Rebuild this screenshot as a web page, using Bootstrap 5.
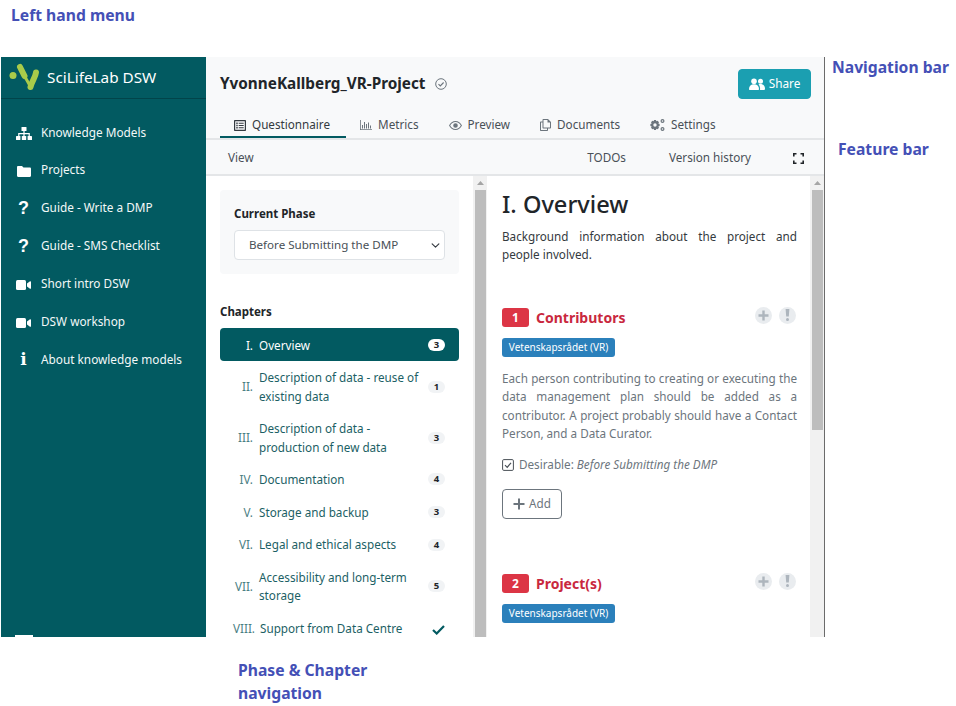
<!DOCTYPE html>
<html lang="en">
<head>
    <meta charset="UTF-8">
    <title>Questionnaire - SciLifeLab DSW</title>
    <link href="https://cdn.jsdelivr.net/npm/bootstrap@5.3.0/dist/css/bootstrap.min.css" rel="stylesheet">
    <style>
        body {
            background-color: #fff;
            font-family: "Noto Sans", sans-serif;
            font-size: 11.7px;
            color: #343a40;
            overflow: hidden;
        }
        .page-note {
            color: #4450b6;
            font-weight: 700;
            font-size: 15.7px;
            line-height: 23px;
        }
        .note-top { height: 57px; padding: 4px 0 0 11px; }
        .note-side { margin-top: -1px; }
        .note-nav { margin: 0 0 59px 7px; }
        .note-feature { margin-left: 13px; }
        .note-bottom { padding: 22px 0 0 238px; }
        .app-frame {
            width: 824px;
            height: 580px;
            margin-left: 1px;
            border-right: 1px solid #6b6b6b;
            overflow: hidden;
        }
        .side-menu {
            width: 205px;
            flex-shrink: 0;
            background-color: #025a61;
            color: #fff;
        }
        .side-brand {
            height: 42px;
            padding-left: 7px;
            border-bottom: 1px solid #01444a;
            font-size: 15.3px;
            gap: 6px;
        }
        .side-list { padding-top: 14.5px; }
        .side-item {
            height: 37.85px;
            font-size: 11.8px;
            color: #f3f8f8;
        }
        .side-icon {
            width: 40px;
            padding-left: 5px;
            flex-shrink: 0;
            text-align: center;
            fill: #fff;
        }
        .glyph-icon { font-family: "Liberation Sans", sans-serif; font-weight: 700; font-size: 18px; color: #fff; line-height: 1; }
        .glyph-serif { font-family: "DejaVu Serif", serif; font-size: 17px; }
        .side-stub { width: 18px; height: 2px; margin: auto 0 0 14px; background-color: #fff; flex-shrink: 0; }
        .main-col { min-width: 0; }
        .top-bar { background-color: #f8f9fa; border-bottom: 2px solid #e4e6e8; height: 83px; flex-shrink: 0; }
        .title-row { height: 55px; padding: 0 13px 2px 14px; }
        .project-title { font-size: 15.3px; font-weight: 700; color: #212529; margin: 0 2px 0 0; }
        .share-btn {
            --bs-btn-bg: #1b9fb1;
            --bs-btn-border-color: #1b9fb1;
            --bs-btn-color: #fff;
            --bs-btn-border-radius: 4px;
            font-size: 11.8px;
            width: 73px;
            height: 30px;
            padding: 0;
        }
        .tab-row { padding-left: 14px; height: 26px; }
        .tab-row .nav-link {
            color: #495057;
            font-size: 11.7px;
            padding: 2px 14px 0;
            height: 26px;
            display: flex;
            align-items: center;
            gap: 6px;
            border-bottom: 2px solid transparent;
            margin-right: 2px;
        }
        .tab-row .nav-link.active { color: #343a40; border-bottom-color: #025a61; padding-right: 16px; margin-right: 0; }
        .tab-row .nav-link svg { fill: #6c757d; }
        .tab-row .nav-link.active svg { fill: #343a40; }
        .feature-bar {
            height: 36px;
            flex-shrink: 0;
            background-color: #f8f9fa;
            border-bottom: 2px solid #e4e6e8;
            padding: 2px 20px 0 22px;
            color: #495057;
        }
        .todo-gap { margin: 0 43px 0 auto; }
        .history-gap { margin-right: 42px; }
        .work-area { min-height: 0; }
        .phase-pane { width: 267px; flex-shrink: 0; padding: 14px 14px 0 14px; overflow: hidden; }
        .phase-box { background-color: #f8f9fa; border-radius: 4px; padding: 16px 14px 14px; height: 84px; }
        .phase-label { font-weight: 700; font-size: 11.5px; color: #212529; margin-bottom: 8px; line-height: 16px; }
        .phase-select {
            height: 30px;
            font-size: 11.6px;
            padding: 0 24px 0 14px;
            color: #495057;
            border-radius: 4px;
            background-position: right 3px center;
            background-size: 11px 9px;
        }
        .chapter-head { font-weight: 700; font-size: 11.5px; color: #212529; margin: 30px 0 8px; line-height: 16px; }
        .chapter-item {
            border: 0;
            padding: 1px 0 0;
            background: none;
            color: #1c5f65;
            display: flex;
            align-items: center;
            font-size: 11.7px;
            line-height: 18.3px;
        }
        .chapter-item.h-one { height: 32.6px; }
        .chapter-item.h-two { height: 51px; }
        .chapter-item.active {
            background-color: #025a61;
            color: #fff;
            border-radius: 4px;
            margin-top: 0;
        }
        .chapter-num { width: 33px; text-align: right; flex-shrink: 0; margin-right: 6px; color: #4c7f84; }
        .chapter-item.active .chapter-num { color: #fff; }
        .chapter-name { flex: 1; min-width: 0; padding-right: 4px; }
        .chapter-count {
            background-color: #f1f3f5;
            color: #212529;
            border-radius: 8px;
            font-size: 9.5px;
            padding: 0;
            width: 17px;
            line-height: 12px;
            margin-right: 14px;
            flex-shrink: 0;
        }
        .chapter-item.active .chapter-count { background-color: #fff; }
        .chapter-check { margin-right: 12px; width: 17px; text-align: center; flex-shrink: 0; }
        .num-wide { width: 35px; margin-right: 5px; white-space: nowrap; }
        .fake-scroll {
            width: 14px;
            flex-shrink: 0;
            background-color: #f1f1f1;
            display: flex;
            flex-direction: column;
        }
        .scroll-arrow { height: 14px; display: flex; align-items: center; justify-content: center; }
        .scroll-thumb { background-color: #bdbdbd; margin: 0 1px 0 2px; }
        .thumb-long { flex: 1; }
        .thumb-short { height: 240px; }
        .content-pane { flex: 1; min-width: 0; padding: 13px 13px 0 15px; overflow: hidden; }
        .chapter-title { font-size: 23.6px; font-weight: 500; color: #212529; margin: 0 0 8px; line-height: 30px; }
        .chapter-intro { text-align: justify; color: #343a40; line-height: 18.3px; margin: 0 0 43px; }
        .question-block { height: 266px; }
        .question-row { height: 22px; margin-bottom: 9px; }
        .question-num {
            background-color: #dc3545;
            color: #fff;
            border-radius: 3px;
            width: 27px;
            height: 19px;
            font-size: 12px;
            font-weight: 700;
            padding: 0;
            line-height: 19px;
            margin-right: 7px;
        }
        .question-title { font-size: 14px; font-weight: 700; color: #c9283e; line-height: 20px; }
        .round-action {
            width: 17px;
            height: 17px;
            border-radius: 50%;
            background-color: #e9ecef;
            margin-left: 7px;
            display: flex;
            align-items: center;
            justify-content: center;
            margin-top: -5px;
        }
        .round-last { margin-right: 1px; }
        .package-tag {
            background-color: #2b80bb;
            color: #fff;
            border-radius: 3px;
            font-weight: 400;
            font-size: 10px;
            padding: 0;
            width: 113px;
            height: 19px;
            line-height: 19px;
            display: block;
        }
        .question-text { color: #6c757d; text-align: justify; line-height: 18.5px; margin: 12px 0 13px; }
        .desired-row { color: #6c757d; gap: 5px; height: 18px; margin-bottom: 15px; }
        .add-btn {
            --bs-btn-color: #6c757d;
            --bs-btn-border-color: #6c757d;
            --bs-btn-border-radius: 4px;
            width: 60px;
            height: 30px;
            font-size: 11.7px;
            padding: 0;
            gap: 4px;
        }
    </style>
</head>
<body>
    <div class="page-note note-top">Left hand menu</div>

    <div class="d-flex">
        <div class="app-frame d-flex">
            <div class="side-menu d-flex flex-column">
                <div class="side-brand d-flex align-items-center">
                    <svg width="33" height="30" viewBox="0 0 33 30" fill="none" stroke="#a9cb4a" stroke-linecap="round">
                        <circle cx="5" cy="12.500" r="3.500" fill="#a9cb4a" stroke="none"/>
                        <path d="M12 4 16.500 13" stroke-width="6"/>
                        <path d="M16.500 13 21 21" stroke-width="3"/>
                        <path d="M28 9.500C27.500 14 24 18 22.500 24" stroke-width="6"/>
                    </svg>
                    <span>SciLifeLab DSW</span>
                </div>
                <div class="side-list flex-grow-1 d-flex flex-column">
                    <div class="side-item d-flex align-items-center">
                        <span class="side-icon"><svg width="16" height="13" viewBox="0 0 16 13"><rect x="5.500" y="0" width="5" height="4" rx=".6"/><rect x="0" y="9" width="4.400" height="4" rx=".6"/><rect x="5.800" y="9" width="4.400" height="4" rx=".6"/><rect x="11.600" y="9" width="4.400" height="4" rx=".6"/><path d="M7.400 4h1.200v2h5.200v3h-1.200V7.200H8.600V9H7.400V7.200H3.400V9H2.200V6h5.200z"/></svg></span>
                        <span>Knowledge Models</span>
                    </div>
                    <div class="side-item d-flex align-items-center">
                        <span class="side-icon"><svg width="14" height="11" viewBox="0 0 14 11"><path d="M1.200 0H5l1.500 1.600h6.300c.7 0 1.200.5 1.200 1.200v7c0 .7-.5 1.200-1.200 1.200H1.200C.5 11 0 10.500 0 9.800V1.200C0 .5.500 0 1.200 0z"/></svg></span>
                        <span>Projects</span>
                    </div>
                    <div class="side-item d-flex align-items-center">
                        <span class="side-icon glyph-icon">?</span>
                        <span>Guide - Write a DMP</span>
                    </div>
                    <div class="side-item d-flex align-items-center">
                        <span class="side-icon glyph-icon">?</span>
                        <span>Guide - SMS Checklist</span>
                    </div>
                    <div class="side-item d-flex align-items-center">
                        <span class="side-icon"><svg width="15" height="10" viewBox="0 0 15 10"><rect width="10" height="10" rx="1.500"/><path d="M11 3.600 14 1.300c.4-.3 1-.1 1 .5v6.400c0 .6-.6.8-1 .5L11 6.400z"/></svg></span>
                        <span>Short intro DSW</span>
                    </div>
                    <div class="side-item d-flex align-items-center">
                        <span class="side-icon"><svg width="15" height="10" viewBox="0 0 15 10"><rect width="10" height="10" rx="1.500"/><path d="M11 3.600 14 1.300c.4-.3 1-.1 1 .5v6.400c0 .6-.6.8-1 .5L11 6.400z"/></svg></span>
                        <span>DSW workshop</span>
                    </div>
                    <div class="side-item d-flex align-items-center">
                        <span class="side-icon glyph-icon glyph-serif">i</span>
                        <span>About knowledge models</span>
                    </div>
                    <div class="side-stub"></div>
                </div>
            </div>

            <div class="main-col flex-grow-1 d-flex flex-column">
                <div class="top-bar">
                    <div class="title-row d-flex align-items-center">
                        <h1 class="project-title">YvonneKallberg_VR-Project</h1>
                        <svg class="ms-2" width="12" height="12" viewBox="0 0 12 12" fill="none" stroke="#6c757d"><circle cx="6" cy="6" r="5.300"/><path d="M3.500 6.200 5.300 8 8.600 4.500" stroke-width="1.100"/></svg>
                        <button class="btn share-btn ms-auto d-flex align-items-center justify-content-center gap-1" type="button">
                            <svg width="16" height="12" viewBox="0 0 16 12" fill="#fff"><circle cx="5" cy="3.200" r="2.800"/><circle cx="11.500" cy="3.200" r="2.500"/><path d="M0 11c0-3 2-4.800 5-4.800s5 1.800 5 4.800c0 .6-.4 1-1 1H1c-.6 0-1-.4-1-1zM11 12c.3-2.200-.2-4.300-1.500-5.500.6-.3 1.300-.4 2-.4 2.500 0 4.500 1.600 4.500 4.300 0 .9-.5 1.600-1.300 1.600z"/></svg>
                            Share
                        </button>
                    </div>
                    <ul class="nav tab-row">
                        <li class="nav-item"><a class="nav-link active" href="#"><svg width="12" height="11" viewBox="0 0 12 11"><path fill-rule="evenodd" d="M1 0h10c.6 0 1 .4 1 1v9c0 .6-.4 1-1 1H1c-.6 0-1-.4-1-1V1c0-.6.4-1 1-1zm.2 1.200v8.600h9.600V1.200zM2.300 2.600h1.400V4H2.300zm2.400.2h5v1h-5zM2.300 4.800h1.400v1.400H2.300zm2.400.2h5v1h-5zM2.300 7h1.400v1.400H2.300zm2.400.2h5v1h-5z"/></svg>Questionnaire</a></li>
                        <li class="nav-item"><a class="nav-link" href="#"><svg width="12" height="10" viewBox="0 0 12 10"><path d="M0 0h.8v9.200H12v.8H0zM2 5h1v3.400H2zm2-3h1v6.400H4zm2 2h1v4.400H6zm2-1.500h1v5.900H8zm2 3h1v2.900h-1z"/></svg>Metrics</a></li>
                        <li class="nav-item"><a class="nav-link" href="#"><svg width="13" height="9" viewBox="0 0 13 9"><path fill-rule="evenodd" d="M6.500 0C9.300 0 11.700 1.800 13 4.500 11.700 7.200 9.300 9 6.500 9S1.300 7.200 0 4.500C1.300 1.800 3.700 0 6.500 0zm0 1C4.300 1 2.300 2.400 1.200 4.500 2.300 6.600 4.300 8 6.500 8s4.200-1.400 5.300-3.500C10.700 2.400 8.700 1 6.500 1zm0 1.200a2.300 2.300 0 1 1 0 4.600 2.300 2.300 0 0 1 0-4.600z"/></svg>Preview</a></li>
                        <li class="nav-item"><a class="nav-link" href="#"><svg width="11" height="12" viewBox="0 0 11 12"><path fill-rule="evenodd" d="M3.500 0H8l3 3v5.500c0 .6-.4 1-1 1H8V11c0 .6-.4 1-1 1H1c-.6 0-1-.4-1-1V3.500c0-.6.4-1 1-1h1.500V1c0-.6.4-1 1-1zm0 1v7.500H10V3.500H7.500V1zM1 3.500V11h6V9.500H3.500c-.6 0-1-.4-1-1v-5z"/></svg>Documents</a></li>
                        <li class="nav-item"><a class="nav-link" href="#"><svg width="15" height="12" viewBox="0 0 15 12"><path fill-rule="evenodd" d="M4 1h2l.3 1.300 1.300-.6 1.400 1.500-.7 1.200 1.300.5v2.200l-1.300.5.700 1.200L7.600 10.300l-1.300-.6L6 11H4l-.3-1.300-1.300.6L1 8.800l.7-1.200L.4 7.100V4.900l1.300-.5L1 3.200l1.400-1.500 1.300.6zM5 4.300a1.700 1.700 0 1 0 0 3.400 1.700 1.700 0 0 0 0-3.400z"/><path fill-rule="evenodd" d="M12.500 0a2 2 0 1 1 0 4 2 2 0 0 1 0-4zm0 1.200a.8.800 0 1 0 0 1.600.8.800 0 0 0 0-1.600zM12.500 8a2 2 0 1 1 0 4 2 2 0 0 1 0-4zm0 1.200a.8.800 0 1 0 0 1.600.8.800 0 0 0 0-1.600z"/></svg>Settings</a></li>
                    </ul>
                </div>

                <div class="feature-bar d-flex align-items-center">
                    <span>View</span>
                    <span class="todo-gap">TODOs</span>
                    <span class="history-gap">Version history</span>
                    <svg width="11" height="11" viewBox="0 0 11 11" fill="none" stroke="#212529" stroke-width="1.600"><path d="M.8 3.500V.8h2.700M7.500.8h2.700v2.700M10.200 7.500v2.700H7.500M3.500 10.200H.8V7.500"/></svg>
                </div>

                <div class="work-area d-flex flex-grow-1">
                    <div class="phase-pane">
                        <div class="phase-box">
                            <div class="phase-label">Current Phase</div>
                            <select class="form-select phase-select"><option>Before Submitting the DMP</option></select>
                        </div>
                        <div class="chapter-head">Chapters</div>
                        <div class="list-group">
                            <a href="#" class="list-group-item chapter-item h-one active"><span class="chapter-num">I.</span><span class="chapter-name">Overview</span><span class="badge chapter-count">3</span></a>
                            <a href="#" class="list-group-item chapter-item h-two"><span class="chapter-num">II.</span><span class="chapter-name">Description of data - reuse of existing data</span><span class="badge chapter-count">1</span></a>
                            <a href="#" class="list-group-item chapter-item h-two"><span class="chapter-num">III.</span><span class="chapter-name">Description of data - production of new data</span><span class="badge chapter-count">3</span></a>
                            <a href="#" class="list-group-item chapter-item h-one"><span class="chapter-num">IV.</span><span class="chapter-name">Documentation</span><span class="badge chapter-count">4</span></a>
                            <a href="#" class="list-group-item chapter-item h-one"><span class="chapter-num">V.</span><span class="chapter-name">Storage and backup</span><span class="badge chapter-count">3</span></a>
                            <a href="#" class="list-group-item chapter-item h-one"><span class="chapter-num">VI.</span><span class="chapter-name">Legal and ethical aspects</span><span class="badge chapter-count">4</span></a>
                            <a href="#" class="list-group-item chapter-item h-two"><span class="chapter-num">VII.</span><span class="chapter-name">Accessibility and long-term storage</span><span class="badge chapter-count">5</span></a>
                            <a href="#" class="list-group-item chapter-item h-one"><span class="chapter-num num-wide">VIII.</span><span class="chapter-name">Support from Data Centre</span><span class="chapter-check"><svg width="13" height="10" viewBox="0 0 13 10" fill="none" stroke="#025a61" stroke-width="2.200"><path d="M1 5 4.700 8.500 12 1"/></svg></span></a>
                        </div>
                    </div>

                    <div class="fake-scroll">
                        <div class="scroll-arrow"><svg width="7" height="4" viewBox="0 0 7 4" fill="#a5a5a5"><path d="M3.500 0 7 4H0z"/></svg></div>
                        <div class="scroll-thumb thumb-long"></div>
                    </div>

                    <div class="content-pane">
                        <h2 class="chapter-title">I. Overview</h2>
                        <p class="chapter-intro">Background information about the project and people involved.</p>

                        <div class="question-block">
                            <div class="question-row d-flex align-items-center">
                                <span class="badge question-num">1</span>
                                <span class="question-title">Contributors</span>
                                <span class="round-action ms-auto"><svg width="11" height="11" viewBox="0 0 11 11" fill="#adb5bd"><path d="M4.300 .5h2.400v3.800h3.800v2.400H6.700v3.800H4.300V6.700H.5V4.300h3.800z"/></svg></span>
                                <span class="round-action round-last"><svg width="5" height="12" viewBox="0 0 5 12" fill="#adb5bd"><path d="M.6 0h3.800l-.6 7.500H1.200zM2.500 9a1.500 1.500 0 1 1 0 3 1.500 1.500 0 0 1 0-3z"/></svg></span>
                            </div>
                            <span class="badge package-tag">Vetenskapsrådet (VR)</span>
                            <p class="question-text">Each person contributing to creating or executing the data management plan should be added as a contributor. A project probably should have a Contact Person, and a Data Curator.</p>
                            <div class="desired-row d-flex align-items-center">
                                <svg width="12" height="12" viewBox="0 0 12 12" fill="none" stroke="#495057"><rect x=".6" y=".6" width="10.800" height="10.800" rx="1.200"/><path d="M3 6.200 5.200 8.400 9 3.800" stroke-width="1.200"/></svg>
                                <span>Desirable: <em>Before Submitting the DMP</em></span>
                            </div>
                            <button class="btn btn-outline-secondary add-btn d-flex align-items-center justify-content-center" type="button">
                                <svg width="12" height="12" viewBox="0 0 12 12" fill="#6c757d"><path d="M5 .5h2V5h4.500v2H7v4.500H5V7H.5V5H5z"/></svg>Add
                            </button>
                        </div>

                        <div class="question-block">
                            <div class="question-row d-flex align-items-center">
                                <span class="badge question-num">2</span>
                                <span class="question-title">Project(s)</span>
                                <span class="round-action ms-auto"><svg width="11" height="11" viewBox="0 0 11 11" fill="#adb5bd"><path d="M4.300 .5h2.400v3.800h3.800v2.400H6.700v3.800H4.300V6.700H.5V4.300h3.800z"/></svg></span>
                                <span class="round-action round-last"><svg width="5" height="12" viewBox="0 0 5 12" fill="#adb5bd"><path d="M.6 0h3.800l-.6 7.500H1.200zM2.500 9a1.500 1.500 0 1 1 0 3 1.500 1.500 0 0 1 0-3z"/></svg></span>
                            </div>
                            <span class="badge package-tag">Vetenskapsrådet (VR)</span>
                        </div>
                    </div>

                    <div class="fake-scroll">
                        <div class="scroll-arrow"><svg width="7" height="4" viewBox="0 0 7 4" fill="#a5a5a5"><path d="M3.500 0 7 4H0z"/></svg></div>
                        <div class="scroll-thumb thumb-short"></div>
                    </div>
                </div>
            </div>
        </div>

        <div class="note-side">
            <div class="page-note note-nav">Navigation bar</div>
            <div class="page-note note-feature">Feature bar</div>
        </div>
    </div>

    <div class="page-note note-bottom">Phase &amp; Chapter<br>navigation</div>

    <script src="https://cdn.jsdelivr.net/npm/bootstrap@5.3.0/dist/js/bootstrap.bundle.min.js"></script>
</body>
</html>
